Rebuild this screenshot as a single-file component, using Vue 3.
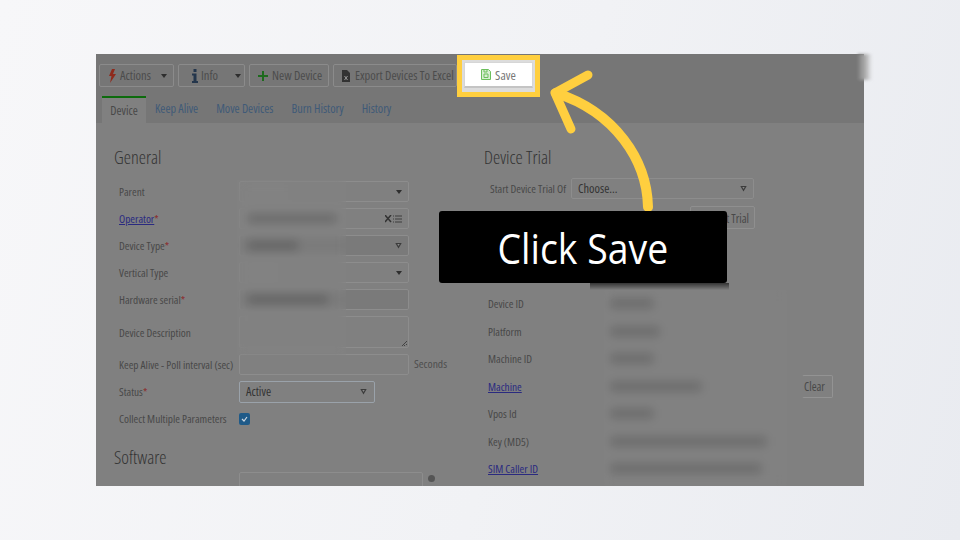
<script setup>
const leftRows = [
  { label: 'Parent', kind: 'select', bar: 40, shade: 'faint', arrow: 'solid' },
  { label: 'Operator', link: true, req: true, kind: 'lookup', bar: 88, shade: 'mid' },
  { label: 'Device Type', req: true, kind: 'select', bar: 50, shade: 'dark', arrow: 'open', disabled: true },
  { label: 'Vertical Type', kind: 'select', bar: 30, shade: 'faint', arrow: 'solid' },
  { label: 'Hardware serial', req: true, kind: 'input', bar: 80, shade: 'dark', disabled: true }
]
const rightRows = [
  { label: 'Device ID', bar: 42 },
  { label: 'Platform', bar: 48 },
  { label: 'Machine ID', bar: 42 },
  { label: 'Machine', link: true, bar: 90, clear: true },
  { label: 'Vpos Id', bar: 42 },
  { label: 'Key (MD5)', bar: 155 },
  { label: 'SIM Caller ID', link: true, bar: 150 }
]
</script>

<template>
  <div class="page">
    <div class="screen">
      <div class="toolbar">
        <button class="tool w-actions">
          <svg width="9" height="14" viewBox="0 0 9 14"><path d="M4 0 1 7h2.500L2 14l6-9H5l2-5z" fill="#8e2a1c" /></svg>
          <span>Actions</span><i class="caret"></i>
        </button>
        <button class="tool w-info">
          <svg width="6" height="14" viewBox="0 0 6 14"><path d="M1.500 0h3v3h-3zM0 4.500h4.500V12H6v2H0v-2h1.500V6.500H0z" fill="#24364c" /></svg>
          <span>Info</span><i class="caret"></i>
        </button>
        <button class="tool w-new">
          <svg width="10" height="10" viewBox="0 0 10 10"><path d="M4 0h2v4h4v2H6v4H4V6H0V4h4z" fill="#1d6a1d" /></svg>
          <span>New Device</span>
        </button>
        <button class="tool w-export">
          <svg width="8" height="12" viewBox="0 0 8 12"><path d="M0 0h5l3 3v9H0z" fill="#333" /><path d="m2.500 6 3 4m0-4-3 4" stroke="#999" fill="none" /></svg>
          <span>Export Devices To Excel</span>
        </button>
      </div>

      <div class="tabs">
        <div class="tab active">Device</div>
        <div class="tab">Keep Alive</div>
        <div class="tab">Move Devices</div>
        <div class="tab">Burn History</div>
        <div class="tab">History</div>
      </div>

      <div class="content">
        <section class="left">
          <h2>General</h2>
          <div class="form">
            <div v-for="r in leftRows" :key="r.label" class="row">
              <label class="lbl">
                <a v-if="r.link">{{ r.label }}</a><template v-else>{{ r.label }}</template><em v-if="r.req">*</em>
              </label>
              <div class="field" :class="{ disabled: r.disabled }">
                <b class="bar" :class="r.shade" :style="{ width: r.bar + 'px' }"></b>
                <i v-if="r.arrow === 'solid'" class="caret"></i>
                <i v-if="r.arrow === 'open'" class="open-caret"></i>
                <svg v-if="r.kind === 'lookup'" width="18" height="8" viewBox="0 0 18 8" class="lookup">
                  <path d="m0 0 6 7m0-7-6 7" stroke="#333" stroke-width="1.500" fill="none" />
                  <path d="M8 1h1M8 4h1M8 7h1M10 1h7M10 4h7M10 7h7" stroke="#3c3c3c" fill="none" />
                </svg>
              </div>
            </div>
            <div class="row tall">
              <label class="lbl">Device Description</label>
              <div class="field area"></div>
            </div>
            <div class="row keep">
              <label class="lbl">Keep Alive - Poll interval (sec)</label>
              <div class="field"></div>
              <span class="unit">Seconds</span>
            </div>
            <div class="row status">
              <label class="lbl">Status<em>*</em></label>
              <div class="field short"><span>Active</span><i class="open-caret"></i></div>
            </div>
            <div class="row check">
              <label class="lbl">Collect Multiple Parameters</label>
              <span class="box">
                <svg width="7" height="6" viewBox="0 0 7 6"><path d="m1 3 2 2 3-4" stroke="#cfd8e0" stroke-width="1.200" fill="none" /></svg>
              </span>
            </div>
          </div>
          <h2 class="software">Software</h2>
          <div class="row soft-row">
            <div class="field soft"></div><i class="dot"></i>
          </div>
        </section>

        <section class="right">
          <h2>Device Trial</h2>
          <div class="trial-row">
            <label>Start Device Trial Of</label>
            <div class="field trial-select"><span>Choose...</span><i class="open-caret"></i></div>
          </div>
          <button class="trial-btn">Start Trial</button>
          <div class="info-list">
            <div v-for="r in rightRows" :key="r.label" class="info-row">
              <label><a v-if="r.link">{{ r.label }}</a><template v-else>{{ r.label }}</template></label>
              <div class="value"><b class="bar mid" :style="{ width: r.bar + 'px' }"></b></div>
              <button v-if="r.clear" class="clear">Clear</button>
            </div>
          </div>
        </section>
      </div>

      <div class="frost frost-left"></div>
      <div class="frost frost-right"></div>
    </div>

    <div class="corner-smear"></div>

    <div class="highlight">
      <div class="save">
        <svg width="10" height="11" viewBox="0 0 10 11">
          <path d="M.5.500h7l2 2v8h-9z" fill="#d8eed2" stroke="#6cbf5c" />
          <path d="M3 .500v2.500h3V.500M3 5h4v3.500H3z" fill="none" stroke="#6cbf5c" />
        </svg>
        <span>Save</span>
      </div>
    </div>

    <svg class="arrow" width="960" height="540" viewBox="0 0 960 540">
      <path d="M648 207C647 160 615 112 556 93" fill="none" stroke="#ffcf3f" stroke-width="10" stroke-linecap="round" />
      <path d="M588 75 555 93 571 129" fill="none" stroke="#ffcf3f" stroke-width="9" stroke-linecap="round" stroke-linejoin="round" />
    </svg>

    <div class="caption"><span>Click Save</span></div>
  </div>
</template>

<style>
html, body { margin: 0; }
</style>

<style scoped>
.page {
  position: relative;
  width: 960px;
  height: 540px;
  box-sizing: border-box;
  padding: 54px 96px;
  overflow: hidden;
  background: linear-gradient(105deg, #f7f7f9 0%, #f1f2f5 55%, #e9ebf0 100%);
  font-family: "Open Sans", "Noto Sans", sans-serif;
  font-stretch: 75%;
  font-size: 11.300px;
  color: #484848;
}
.screen {
  position: relative;
  width: 768px;
  height: 432px;
  overflow: hidden;
  background: #808080;
  filter: blur(0.5px);
}
button {
  font: inherit;
  color: inherit;
  background: none;
  box-sizing: border-box;
}
.toolbar {
  display: flex;
  gap: 4px;
  height: 42px;
  box-sizing: border-box;
  padding: 10px 3px 0;
  background: #767676;
}
.tool {
  display: flex;
  align-items: center;
  gap: 3px;
  height: 23px;
  border: 1px solid #8b8b8b;
  border-radius: 2px;
  padding: 0 0 0 8px;
  color: #4c4c4c;
  white-space: nowrap;
  font-size: 12.500px;
}
.w-actions { width: 75px; }
.w-info { width: 67px; padding-left: 13px; }
.w-new { width: 80px; gap: 4px; }
.w-export { width: 124px; gap: 5px; }
.tool .caret { margin-left: 7px; }
.w-info .caret { margin-left: 14px; }
.caret {
  display: inline-block;
  width: 0;
  height: 0;
  border: 3.500px solid transparent;
  border-top: 4px solid #2e2e2e;
  border-bottom: 0;
}
.open-caret {
  display: inline-block;
  position: relative;
  flex: none;
  width: 7px;
  height: 6px;
  background: #3c3c3c;
  clip-path: polygon(0 0, 100% 0, 50% 100%);
}
.open-caret::after {
  content: "";
  position: absolute;
  left: 2px;
  top: 1px;
  width: 3px;
  height: 2.500px;
  background: #8a8a8a;
  clip-path: polygon(0 0, 100% 0, 50% 100%);
}
.tabs {
  display: flex;
  height: 27px;
  padding-left: 6px;
  background: #767676;
  color: #3f5a78;
  font-size: 12.200px;
}
.tab {
  box-sizing: border-box;
  padding: 2px 0 0;
  margin-right: 18px;
  line-height: 22px;
  white-space: nowrap;
}
.tab.active {
  width: 44px;
  margin-right: 9px;
  text-align: center;
  background: #808080;
  border-top: 2px solid #0d6b0d;
  color: #484848;
  padding-top: 2px;
}
.content {
  display: flex;
  height: 363px;
}
.left {
  width: 370px;
  flex: none;
  box-sizing: border-box;
  padding: 22px 0 0 18px;
}
h2 {
  margin: 0;
  font-weight: 300;
  font-size: 18.300px;
  line-height: 24px;
  color: #333;
}
.form {
  margin: 9px 0 0 5px;
}
.row {
  display: flex;
  align-items: center;
  height: 27px;
}
.lbl {
  width: 120px;
  flex: none;
  white-space: nowrap;
}
.lbl em, label em {
  font-style: normal;
  color: #8b2a2a;
}
a {
  color: #2a2a80;
  text-decoration: underline;
}
.field {
  position: relative;
  display: flex;
  align-items: center;
  justify-content: space-between;
  width: 170px;
  height: 21px;
  flex: none;
  box-sizing: border-box;
  padding: 0 6px;
  border: 1px solid #8d8d8d;
  border-radius: 2px;
  color: #333;
  font-size: 12.400px;
}
.field.disabled {
  background: #7a7a7a;
}
.lookup { flex: none; margin-right: -1px; }
.bar {
  display: block;
  height: 9px;
  flex: none;
  margin-left: 2px;
}
.bar.faint { background: #838383; }
.bar.mid { background: #686868; }
.bar.dark { background: #606060; }
.row.tall { height: 38px; }
.field.area { height: 32px; }
.field.area::after {
  content: "";
  position: absolute;
  right: 1px;
  bottom: 1px;
  width: 5px;
  height: 5px;
  background: linear-gradient(135deg, transparent 45%, #444 45%, #444 55%, transparent 55%, transparent 70%, #444 70%, #444 80%, transparent 80%);
}
.row.keep { height: 27px; }
.unit { margin-left: 5px; margin-top: -3px; color: #4e4e4e; font-size: 11.600px; }
.row.status { height: 27px; }
.field.short {
  width: 136px;
  height: 22px;
  border-color: #9aa2aa;
}
.field.short .open-caret { margin-right: 1px; }
.row.check { height: 27px; }
.box {
  display: flex;
  align-items: center;
  justify-content: center;
  width: 11px;
  height: 12px;
  border-radius: 2px;
  background: #1f5a88;
}
.software { margin: 13px 0 0; }
.soft-row {
  margin: 3px 0 0 125px;
  height: 21px;
  align-items: flex-start;
}
.field.soft { width: 184px; }
.dot {
  width: 7px;
  height: 7px;
  margin: 3px 0 0 5px;
  border-radius: 50%;
  background: #555;
}
.right {
  flex: 1;
  box-sizing: border-box;
  padding: 22px 0 0 18px;
}
.trial-row {
  display: flex;
  align-items: center;
  margin: 9px 0 0 6px;
}
.trial-row label { width: 81px; white-space: nowrap; flex: none; }
.trial-select { width: 183px; }
.trial-btn {
  display: block;
  width: 65px;
  height: 23px;
  margin: 7px 0 0 206px;
  border: 1px solid #8f8f8f;
  border-radius: 2px;
  color: #484848;
  white-space: nowrap;
  text-align: right;
  padding: 0 5px 0 0;
  font-size: 11.800px;
}
.info-list {
  margin: 61px 0 0 4px;
}
.info-row {
  display: flex;
  align-items: center;
  height: 27.500px;
}
.info-row label { width: 116px; flex: none; }
.value {
  width: 183px;
  flex: none;
  padding-left: 5px;
  box-sizing: border-box;
}
.clear {
  width: 31px;
  height: 23px;
  margin-left: 15px;
  border: 1px solid #939393;
  border-left-color: transparent;
  border-radius: 2px;
  padding: 0 0 0 1px;
  text-align: left;
  color: #484848;
  background: #808080;
  font-size: 11.800px;
}
.frost {
  position: absolute;
  backdrop-filter: blur(5px);
  background: rgba(135, 135, 135, 0.1);
}
.frost-left { left: 141px; top: 126px; width: 109px; height: 175px; }
.frost-right { left: 508px; top: 236px; width: 183px; height: 196px; }
.corner-smear {
  position: absolute;
  left: 858px;
  top: 54px;
  width: 14px;
  height: 26px;
  background: linear-gradient(90deg, #808080 0%, #b0b0b0 55%, rgba(225, 225, 228, 0) 100%);
  filter: blur(1.500px);
}
.highlight {
  position: absolute;
  left: 457px;
  top: 55px;
  width: 83px;
  height: 42px;
  box-sizing: border-box;
  padding: 2px;
  border: 5px solid #ffcf3f;
  background: #dcdcdc;
}
.save {
  display: flex;
  align-items: center;
  justify-content: center;
  gap: 4px;
  height: 26px;
  background: #fff;
  border: 1px solid #d6d6d6;
  border-bottom: 2px solid #c4c4c4;
  box-sizing: border-box;
  color: #777;
  font-size: 13px;
}
.arrow {
  position: absolute;
  left: 0;
  top: 0;
  pointer-events: none;
}
.caption {
  position: absolute;
  left: 439px;
  top: 211px;
  width: 288px;
  height: 72px;
  display: flex;
  align-items: center;
  justify-content: center;
  background: #000;
  border-radius: 3px;
  color: #fff;
  font-size: 42px;
  font-stretch: 100%;
}
.caption::after {
  content: "";
  position: absolute;
  left: 151px;
  right: -2px;
  top: 100%;
  height: 7px;
  background: linear-gradient(rgba(0, 0, 0, 0.6), rgba(0, 0, 0, 0));
}
.caption span {
  display: block;
  transform: scaleX(0.89);
}
</style>
